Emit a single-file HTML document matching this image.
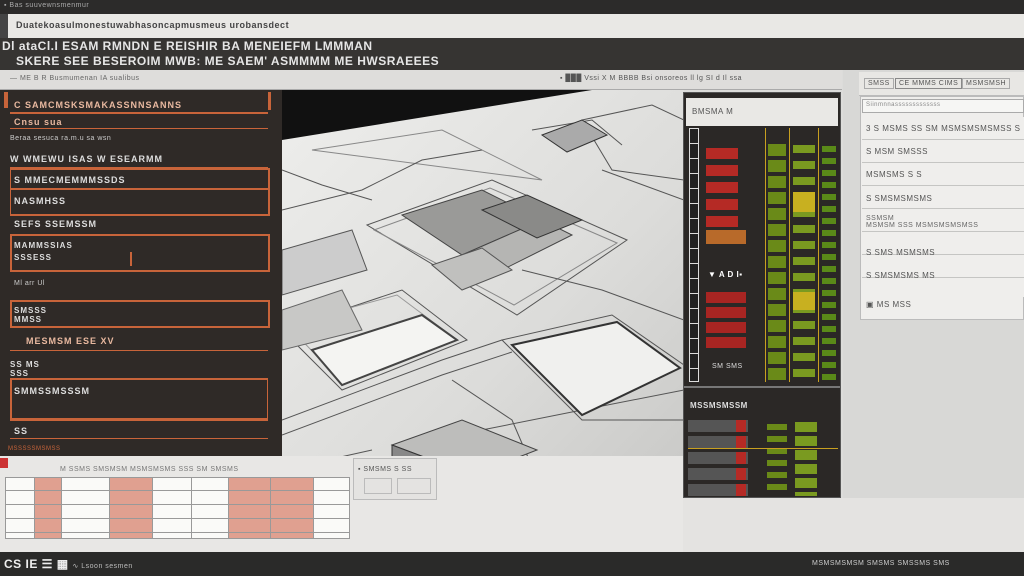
<!DOCTYPE html>
<html><head><meta charset="utf-8"><style>
*{margin:0;padding:0;box-sizing:border-box}
body{width:1024px;height:576px;overflow:hidden;background:#dcdcda;font-family:"Liberation Sans",sans-serif;position:relative}
.a{position:absolute}
.t{position:absolute;white-space:nowrap;font-size:9px;letter-spacing:0.5px}
.o{border:2px solid #c8643a}
.ol{position:absolute;height:2px;background:#c8643a}
.ot{position:absolute;color:#e9b9a0;font-size:9px;font-weight:bold;white-space:nowrap;letter-spacing:1px}
</style></head><body>
<div class="a" style="left:0;top:0;width:1024px;height:14px;background:#2c2b2a"></div>
<div class="t" style="left:4px;top:2px;color:#aaa;font-size:7px">▪ Bas  suuvewnsmenmur</div>
<div class="a" style="left:0;top:14px;width:1024px;height:24px;background:#e9e8e5"></div>
<div class="a" style="left:0;top:14px;width:8px;height:24px;background:#444"></div>
<div class="t" style="left:16px;top:20px;color:#444;font-size:9px;font-weight:bold">Duatekoasulmonestuwabhasoncapmusmeus urobansdect</div>
<div class="a" style="left:0;top:38px;width:1024px;height:32px;background:#363432"></div>
<div class="t" style="left:2px;top:39px;color:#e6e6e6;font-size:12px;font-weight:bold">Dl ataCl.I  ESAM RMNDN E REISHIR BA MENEIEFM LMMMAN</div>
<div class="t" style="left:16px;top:54px;color:#e6e6e6;font-size:12px;font-weight:bold">SKERE SEE BESEROIM MWB: ME SAEM' ASMMMM ME HWSRAEEES</div>
<div class="a" style="left:0;top:70px;width:842px;height:20px;background:#dedddb;border-bottom:1px solid #aaa"></div>
<div class="t" style="left:10px;top:75px;color:#666;font-size:7px">—   ME  B  R  Busmumenan  IA  sualibus</div>
<div class="t" style="left:560px;top:75px;color:#555;font-size:7px"><b>▪ ███</b>  Vssi  X  M BBBB  Bsi onsoreos   ll lg SI d   Il ssa</div>
<div class="a" style="left:0;top:90px;width:282px;height:366px;background:#2f2a27"></div>
<div class="ol" style="left:10px;top:112px;width:258px"></div>
<div class="ol" style="left:10px;top:128px;width:258px;height:1px"></div>
<div class="ol" style="left:10px;top:167px;width:258px;height:1px"></div>
<div class="a o" style="left:10px;top:168px;width:260px;height:48px;border-left-width:1px"></div>
<div class="ol" style="left:10px;top:188px;width:258px"></div>
<div class="a o" style="left:10px;top:234px;width:260px;height:38px"></div>
<div class="a" style="left:130px;top:252px;width:2px;height:14px;background:#c8643a"></div>
<div class="a o" style="left:10px;top:300px;width:260px;height:28px"></div>
<div class="ol" style="left:10px;top:350px;width:258px;height:1px"></div>
<div class="a o" style="left:10px;top:378px;width:258px;height:42px;border-right-width:1px"></div>
<div class="ol" style="left:10px;top:420px;width:258px;height:1px"></div>
<div class="ol" style="left:10px;top:438px;width:258px;height:1px"></div>
<div class="a" style="left:4px;top:92px;width:4px;height:16px;background:#c8643a"></div>
<div class="a" style="left:268px;top:92px;width:3px;height:18px;background:#c8643a"></div>
<div class="ot" style="left:14px;top:100px">C SAMCMSKSMAKASSNNSANNS</div>
<div class="ot" style="left:14px;top:117px">Cnsu sua</div>
<div class="t" style="left:10px;top:135px;color:#ccc;font-size:7px">Beraa  sesuca  ra.m.u  sa  wsn</div>
<div class="ot" style="left:10px;top:154px;color:#ddd">W WMEWU  ISAS W ESEARMM</div>
<div class="ot" style="left:14px;top:175px;color:#ddd">S MMECMEMMMSSDS</div>
<div class="ot" style="left:14px;top:196px;color:#ddd">NASMHSS</div>
<div class="ot" style="left:14px;top:219px;color:#ddd">SEFS SSEMSSM</div>
<div class="ot" style="left:14px;top:241px;color:#ddd;font-size:8px">MAMMSSIAS</div>
<div class="ot" style="left:14px;top:253px;color:#ddd;font-size:8px">SSSESS</div>
<div class="t" style="left:14px;top:280px;color:#ccc;font-size:7px">Ml                         arr  Ul</div>
<div class="ot" style="left:14px;top:306px;color:#ddd;font-size:8px">SMSSS<br>MMSS</div>
<div class="ot" style="left:26px;top:336px">MESMSM  ESE  XV</div>
<div class="ot" style="left:10px;top:360px;color:#ddd;font-size:8px">SS MS<br>SSS</div>
<div class="ot" style="left:14px;top:386px;color:#ddd">SMMSSMSSSM</div>
<div class="ot" style="left:14px;top:426px;color:#ddd">SS</div>
<div class="t" style="left:8px;top:446px;color:#c8643a;font-size:6px">MSSSSSMSMSS</div>
<svg class="a" style="left:282px;top:90px" width="402" height="412" viewBox="0 0 402 412">
<defs><linearGradient id="g" x1="0" y1="0" x2="1" y2="1"><stop offset="0" stop-color="#eeeeec"/><stop offset="0.6" stop-color="#dcdcda"/><stop offset="1" stop-color="#c8c8c6"/></linearGradient></defs>
<rect width="402" height="412" fill="url(#g)"/>
<polygon points="0,0 310,0 0,50" fill="#111"/>
<g fill="none" stroke="#555" stroke-width="1">
<polygon points="85,135 210,90 345,150 235,225"/>
<polygon points="92,140 208,98 335,153 232,215" stroke="#888"/>
<polygon points="0,240 120,200 185,250 60,300" />
<polygon points="5,235 115,205 175,250 60,292" stroke="#999"/>
<polygon points="220,250 330,225 402,275 402,330 300,330" />
<polygon points="30,60 160,40 260,90" stroke="#888"/>
<polygon points="300,30 370,15 402,30 402,90 330,80" />
<polyline points="0,330 160,270 220,250"/>
<polyline points="0,345 160,285 230,262"/>
<polyline points="100,390 200,340 300,320 402,300"/>
<polyline points="0,80 40,95 90,110"/>
<polyline points="0,175 70,150"/>
<polyline points="0,190 60,170"/>
<polyline points="170,290 230,330 260,400"/>
<polyline points="320,80 402,110"/>
<polyline points="250,40 310,30 340,55"/>
<polyline points="0,120 80,100 140,70 200,60"/>
<polyline points="240,180 320,200 402,230"/>
<polyline points="0,380 90,360"/>
</g>
<polygon points="120,125 200,100 260,130 180,165" fill="#9a9a98" stroke="#444"/>
<polygon points="180,165 260,130 290,145 210,185" fill="#b5b5b3" stroke="#444"/>
<polygon points="200,120 245,105 300,130 255,148" fill="#8a8a88" stroke="#333"/>
<polygon points="150,175 200,158 230,180 180,200" fill="#c0c0be" stroke="#555"/>
<polygon points="110,355 180,330 255,360 190,385" fill="#bdbdbb" stroke="#444"/>
<polygon points="110,355 190,385 190,398 110,368" fill="#888" stroke="#333"/>
<polygon points="260,45 300,30 325,45 285,62" fill="#aaa" stroke="#333"/>
<polygon points="0,160 70,140 85,180 0,205" fill="#ccc" stroke="#555"/>
<polygon points="0,220 60,200 80,240 0,260" fill="#c8c8c6" stroke="#666"/>
<polygon points="30,260 140,225 175,250 60,295" fill="#f4f4f2" stroke="#444" stroke-width="2"/>
<polygon points="230,255 335,232 398,278 300,325" fill="#f0f0ee" stroke="#333" stroke-width="2"/>
</svg>
<div class="a" style="left:683px;top:92px;width:158px;height:406px;background:#2b2826;border:1px solid #555"></div>
<div class="a" style="left:686px;top:98px;width:152px;height:28px;background:#e9e8e5"></div>
<div class="t" style="left:692px;top:107px;color:#555;font-size:8px">BMSMA  M</div>
<div class="a" style="left:689px;top:128px;width:10px;height:254px;border:1px solid #ddd;background:repeating-linear-gradient(#222 0 14px,#ddd 14px 15px)"></div>
<div class="a" style="left:706px;top:145px;width:32px;height:100px;background:repeating-linear-gradient(#2b2826 0 3px,#b52a25 3px 14px,#2b2826 14px 17px)"></div>
<div class="a" style="left:706px;top:230px;width:40px;height:14px;background:#b86a2a"></div>
<div class="a" style="left:706px;top:290px;width:40px;height:62px;background:repeating-linear-gradient(#2b2826 0 2px,#a82522 2px 13px,#2b2826 13px 15px)"></div>
<div class="t" style="left:708px;top:270px;color:#fff;font-size:8px;font-weight:bold">▼ A D I▪</div>
<div class="t" style="left:712px;top:363px;color:#ddd;font-size:7px">SM SMS</div>
<div class="a" style="left:765px;top:128px;width:1px;height:254px;background:#c8a020"></div>
<div class="a" style="left:789px;top:128px;width:1px;height:254px;background:#c8a020"></div>
<div class="a" style="left:818px;top:128px;width:1px;height:254px;background:#c8a020"></div>
<div class="a" style="left:768px;top:140px;width:18px;height:240px;background:repeating-linear-gradient(#2b2826 0 4px,#6a8a18 4px 16px)"></div>
<div class="a" style="left:793px;top:140px;width:22px;height:240px;background:repeating-linear-gradient(#2b2826 0 5px,#7a9a20 5px 13px,#2b2826 13px 16px)"></div>
<div class="a" style="left:793px;top:192px;width:22px;height:20px;background:#c8b020"></div>
<div class="a" style="left:793px;top:292px;width:22px;height:18px;background:#c8b020"></div>
<div class="a" style="left:822px;top:140px;width:14px;height:240px;background:repeating-linear-gradient(#2b2826 0 6px,#5a8a18 6px 12px)"></div>
<div class="a" style="left:684px;top:386px;width:156px;height:2px;background:#777"></div>
<div class="t" style="left:690px;top:401px;color:#ddd;font-size:8px;font-weight:bold">MSSMSMSSM</div>
<div class="a" style="left:688px;top:418px;width:60px;height:78px;background:repeating-linear-gradient(#2b2826 0 2px,#555 2px 14px,#2b2826 14px 16px)"></div>
<div class="a" style="left:736px;top:418px;width:10px;height:78px;background:repeating-linear-gradient(#2b2826 0 2px,#b52a25 2px 14px,#2b2826 14px 16px)"></div>
<div class="a" style="left:767px;top:418px;width:20px;height:78px;background:repeating-linear-gradient(#2b2826 0 6px,#6a8a18 6px 12px)"></div>
<div class="a" style="left:795px;top:418px;width:22px;height:78px;background:repeating-linear-gradient(#2b2826 0 4px,#7a9a20 4px 14px)"></div>
<div class="a" style="left:688px;top:448px;width:150px;height:1px;background:#c8a020"></div>
<div class="a" style="left:843px;top:70px;width:181px;height:430px;background:#d8d8d6"></div>
<div class="a" style="left:859px;top:72px;width:165px;height:24px;background:#e8e7e4;border-bottom:1px solid #bbb"></div>
<div class="t" style="left:864px;top:78px;color:#555;font-size:7px;border:1px solid #aaa;padding:1px 3px">SMSS</div>
<div class="t" style="left:895px;top:78px;color:#555;font-size:7px;border:1px solid #888;padding:1px 3px">CE MMMS CIMS</div>
<div class="t" style="left:962px;top:78px;color:#555;font-size:7px;border:1px solid #aaa;padding:1px 3px">MSMSMSH</div>
<div class="a" style="left:860px;top:96px;width:164px;height:224px;background:#efeeec;border:1px solid #bbb"></div>
<div class="a" style="left:862px;top:99px;width:162px;height:14px;border:1px solid #aaa;background:#f6f6f4"></div>
<div class="t" style="left:866px;top:102px;color:#888;font-size:6px">Siinmnnasssssssssssss</div>
<div class="a" style="left:862px;top:117px;width:162px;height:180px;background:repeating-linear-gradient(#efeeec 0 22px,#c5c5c3 22px 23px)"></div>
<div class="t" style="left:866px;top:124px;color:#555;font-size:8px">3 S MSMS SS SM MSMSMSMSMSS S</div>
<div class="t" style="left:866px;top:147px;color:#555;font-size:8px">S MSM SMSSS</div>
<div class="t" style="left:866px;top:170px;color:#555;font-size:8px">MSMSMS S S</div>
<div class="t" style="left:866px;top:194px;color:#555;font-size:8px">S SMSMSMSMS</div>
<div class="t" style="left:866px;top:215px;color:#666;font-size:7px">SSMSM<br>MSMSM SSS MSMSMSMSMSS</div>
<div class="t" style="left:866px;top:248px;color:#555;font-size:8px">S SMS MSMSMS</div>
<div class="t" style="left:866px;top:271px;color:#555;font-size:8px">S SMSMSMS MS</div>
<div class="t" style="left:866px;top:300px;color:#555;font-size:8px">▣  MS MSS</div>
<div class="a" style="left:0;top:456px;width:683px;height:96px;background:#e8e7e5"></div>
<div class="a" style="left:683px;top:498px;width:341px;height:54px;background:#e4e3e1"></div>
<div class="a" style="left:0;top:458px;width:8px;height:10px;background:#c33"></div>
<div class="t" style="left:60px;top:466px;color:#777;font-size:7px">M     SSMS      SMSMSM MSMSMSMS SSS             SM SMSMS</div>
<div class="a" style="left:5px;top:477px;width:345px;height:62px;background:#fafaf8;border:1px solid #999"></div>
<div class="a" style="left:35px;top:478px;width:26px;height:60px;background:#e0a090"></div>
<div class="a" style="left:110px;top:478px;width:42px;height:60px;background:#e0a090"></div>
<div class="a" style="left:229px;top:478px;width:84px;height:60px;background:#e0a090"></div>
<div class="a" style="left:5px;top:477px;width:345px;height:62px;background:repeating-linear-gradient(transparent 0 13px,#999 13px 14px)"></div>
<div class="a" style="left:34px;top:477px;width:1px;height:62px;background:#999"></div>
<div class="a" style="left:61px;top:477px;width:1px;height:62px;background:#999"></div>
<div class="a" style="left:109px;top:477px;width:1px;height:62px;background:#999"></div>
<div class="a" style="left:152px;top:477px;width:1px;height:62px;background:#999"></div>
<div class="a" style="left:191px;top:477px;width:1px;height:62px;background:#999"></div>
<div class="a" style="left:228px;top:477px;width:1px;height:62px;background:#999"></div>
<div class="a" style="left:270px;top:477px;width:1px;height:62px;background:#999"></div>
<div class="a" style="left:313px;top:477px;width:1px;height:62px;background:#999"></div>
<div class="a" style="left:353px;top:458px;width:84px;height:42px;background:#e4e3e1;border:1px solid #bbb"></div>
<div class="t" style="left:358px;top:466px;color:#555;font-size:7px">▪ SMSMS  S SS</div>
<div class="a" style="left:364px;top:478px;width:28px;height:16px;border:1px solid #bbb"></div>
<div class="a" style="left:397px;top:478px;width:34px;height:16px;border:1px solid #bbb"></div>
<div class="a" style="left:0;top:552px;width:1024px;height:24px;background:#2a2a29"></div>
<div class="t" style="left:4px;top:557px;color:#eee;font-size:12px;font-weight:bold">CS  IE  ☰  ▦ <span style="font-size:7px;font-weight:normal;color:#bbb">  ∿ Lsoon sesmen</span></div>
<div class="t" style="left:812px;top:560px;color:#ccc;font-size:7px">MSMSMSMSM SMSMS SMSSMS SMS</div>
</body></html>
